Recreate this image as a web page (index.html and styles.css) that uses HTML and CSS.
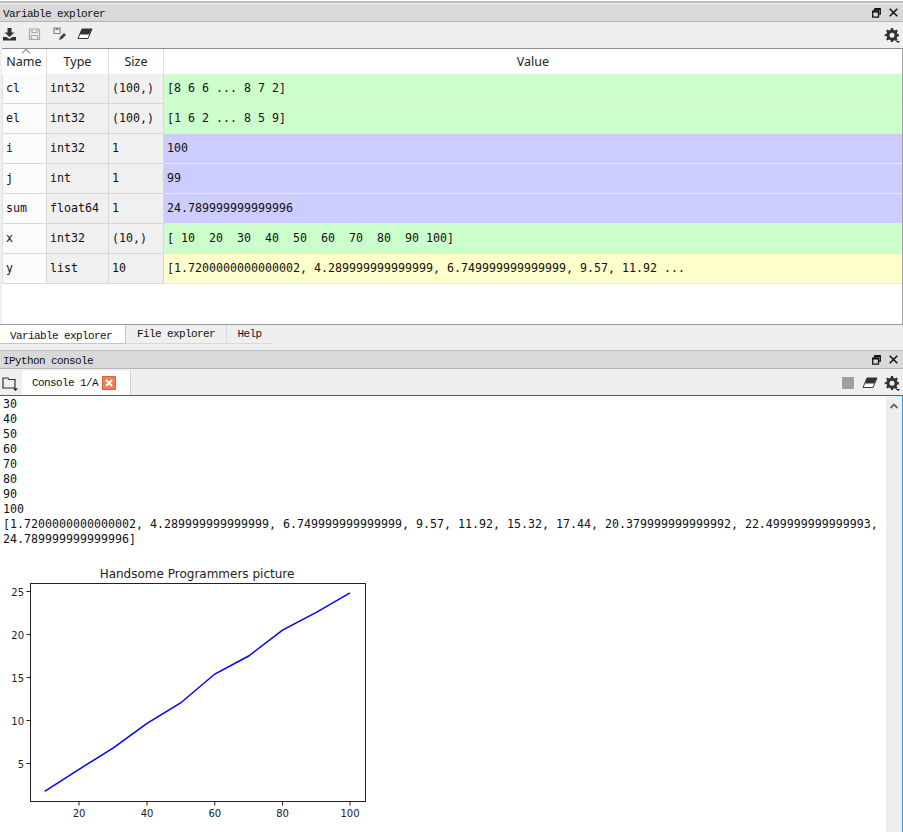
FILE: index.html
```
<!DOCTYPE html>
<html lang="en">
<head>
<meta charset="utf-8">
<title>Spyder</title>
<link rel="stylesheet" href="styles.css">
</head>
<body>
<div class="app">
  <div class="topline"></div>
  <div class="titlebar">
    <span class="title">Variable explorer</span>
    <span class="winbtns">
      <svg width="9" height="10" viewBox="0 0 9 10"><path d="M2.500.7h5.800v5.500H6.500M.7 3.200h5.800v6H.7zM2.500.7v2.500M.7 3.800h5.800M2.500 1.500h5.800" fill="none" stroke="#111" stroke-width="1.300"/></svg>
      <svg width="9" height="9" viewBox="0 0 9 9"><path d="M.7.700l7.600 7.600M8.300.7L.7 8.300" stroke="#111" stroke-width="1.500"/></svg>
    </span>
  </div>
  <div class="toolbar">
    <div class="tools">
      <svg class="ic" width="15" height="15" viewBox="0 0 15 15"><path d="M5.500 1h4v4.500h3L7.500 10 2.500 5.500h3z" fill="#333"/><path d="M1 10h3.500l3 2 3-2H14v3.500H1z" fill="#333"/></svg>
      <svg class="ic" width="15" height="15" viewBox="0 0 15 15"><path d="M2.500 2h9l1 1v9.500h-10zM5 2v3.500h5V2M4.500 12.500V8.500h6v4" fill="none" stroke="#aaa" stroke-width="1.200"/></svg>
      <svg class="ic" width="15" height="15" viewBox="0 0 15 15"><path d="M2 1h6v5.500H2z" fill="none" stroke="#888" stroke-width="1.200"/><path d="M3.500 1h3v2h-3z" fill="#888"/><path d="M7 13l1-3 4-4 2 2-4 4z" fill="#444"/></svg>
      <svg class="ic" width="16" height="12" viewBox="0 0 16 12"><path d="M5 1h10L11 10.500H1z" fill="#fff" stroke="#333"/><path d="M5 1h10L12 6.500H3z" fill="#333"/></svg>
    </div>
    <svg class="gear" width="16" height="16" viewBox="0 0 16 16"><path d="M7 1h2l.4 1.800 1.500.6 1.600-1 1.400 1.400-1 1.600.6 1.500L15 7.300v2l-1.800.4-.6 1.500 1 1.600-1.400 1.400-1.600-1-1.500.6L9 15H7l-.4-1.800-1.500-.6-1.600 1-1.400-1.400 1-1.600-.6-1.500L.7 9.300v-2l1.800-.4.6-1.500-1-1.600 1.400-1.400 1.600 1 1.500-.6z" fill="#333"/><circle cx="8" cy="8.200" r="2.500" fill="#eee"/><path d="M12 14h4l-2 2z" fill="#111"/></svg>
  </div>

  <div class="explorer">
    <div class="grid">
      <div class="head name">Name<span class="sort"></span></div>
      <div class="head">Type</div>
      <div class="head">Size</div>
      <div class="head last">Value</div>

      <div class="cell name">cl</div><div class="cell alt">int32</div><div class="cell alt">(100,)</div><div class="cell val green">[8 6 6 ... 8 7 2]</div>
      <div class="cell name">el</div><div class="cell alt">int32</div><div class="cell alt">(100,)</div><div class="cell val green">[1 6 2 ... 8 5 9]</div>
      <div class="cell name">i</div><div class="cell alt">int32</div><div class="cell alt">1</div><div class="cell val blue">100</div>
      <div class="cell name">j</div><div class="cell alt">int</div><div class="cell alt">1</div><div class="cell val blue">99</div>
      <div class="cell name">sum</div><div class="cell alt">float64</div><div class="cell alt">1</div><div class="cell val blue">24.789999999999996</div>
      <div class="cell name">x</div><div class="cell alt">int32</div><div class="cell alt">(10,)</div><div class="cell val green">[ 10  20  30  40  50  60  70  80  90 100]</div>
      <div class="cell name">y</div><div class="cell alt">list</div><div class="cell alt">10</div><div class="cell val yellow">[1.7200000000000002, 4.289999999999999, 6.749999999999999, 9.57, 11.92 ...</div>
    </div>
  </div>

  <div class="tabs">
    <span class="tab active">Variable explorer</span>
    <span class="tab">File explorer</span>
    <span class="tab help">Help</span>
  </div>

  <div class="titlebar second">
    <span class="title">IPython console</span>
    <span class="winbtns">
      <svg width="9" height="10" viewBox="0 0 9 10"><path d="M2.500.7h5.800v5.500H6.500M.7 3.200h5.800v6H.7zM2.500.7v2.500M.7 3.800h5.800M2.500 1.500h5.800" fill="none" stroke="#111" stroke-width="1.300"/></svg>
      <svg width="9" height="9" viewBox="0 0 9 9"><path d="M.7.700l7.600 7.600M8.300.7L.7 8.300" stroke="#111" stroke-width="1.500"/></svg>
    </span>
  </div>
  <div class="console-bar">
    <svg class="folder" width="16" height="15" viewBox="0 0 16 15"><path d="M1 12V2h5l1 1.500h6v8.500z" fill="none" stroke="#333" stroke-width="1.200"/><path d="M11 12.500h5l-2.500 2.500z" fill="#111"/></svg>
    <div class="ctab">
      <span>Console 1/A</span>
      <svg width="14" height="14" viewBox="0 0 14 14"><rect x="0.500" y="0.500" width="13" height="13" fill="#ee8058" stroke="#d9603a"/><path d="M4 4l6 6M10 4l-6 6" stroke="#fff" stroke-width="2"/></svg>
    </div>
    <div class="ctools">
      <span class="stop"></span>
      <svg width="16" height="12" viewBox="0 0 16 12"><path d="M5 1h10L11 10.500H1z" fill="#fff" stroke="#333"/><path d="M5 1h10L12 6.500H3z" fill="#333"/></svg>
      <svg width="16" height="16" viewBox="0 0 16 16"><path d="M7 1h2l.4 1.800 1.500.6 1.600-1 1.400 1.400-1 1.600.6 1.500L15 7.300v2l-1.800.4-.6 1.500 1 1.600-1.400 1.400-1.600-1-1.500.6L9 15H7l-.4-1.800-1.500-.6-1.600 1-1.400-1.400 1-1.600-.6-1.500L.7 9.300v-2l1.800-.4.6-1.500-1-1.600 1.400-1.400 1.600 1 1.500-.6z" fill="#333"/><circle cx="8" cy="8.200" r="2.500" fill="#eee"/><path d="M12 14h4l-2 2z" fill="#111"/></svg>
    </div>
  </div>

  <div class="console">
    <div class="output">
      <pre class="text">30
40
50
60
70
80
90
100
[1.7200000000000002, 4.289999999999999, 6.749999999999999, 9.57, 11.92, 15.32, 17.44, 20.379999999999992, 22.499999999999993,
24.789999999999996]</pre>
      <svg class="plot" width="380" height="272" viewBox="0 0 380 272">
        <text class="ptitle" x="197" y="18" text-anchor="middle">Handsome Programmers picture</text>
        <rect x="30.500" y="23.500" width="335" height="218" fill="#fff" stroke="#222" stroke-width="1"/>
        <path d="M44.700 231.300L79 209.300 113 188.200 147 163.300 180.600 143 214.800 114 248.600 96 282.500 70.200 316.300 52.300 350 32.900" fill="none" stroke="#00f" stroke-width="1.500"/>
        <path d="M79 241.500v4M147 241.500v4M214.800 241.500v4M282.500 241.500v4M350 241.500v4M30.500 31.500h-4M30.500 74.500h-4M30.500 117.500h-4M30.500 160.500h-4M30.500 203.500h-4" stroke="#222" fill="none"/>
        <g class="ticks">
          <text x="79" y="257" text-anchor="middle">20</text>
          <text x="147" y="257" text-anchor="middle">40</text>
          <text x="214.800" y="257" text-anchor="middle">60</text>
          <text x="282.500" y="257" text-anchor="middle">80</text>
          <text x="350" y="257" text-anchor="middle">100</text>
          <text x="24" y="36" text-anchor="end">25</text>
          <text x="24" y="79" text-anchor="end">20</text>
          <text x="24" y="122" text-anchor="end">15</text>
          <text x="24" y="165" text-anchor="end">10</text>
          <text x="24" y="208" text-anchor="end">5</text>
        </g>
      </svg>
    </div>
    <div class="scrollbar">
      <svg width="10" height="8" viewBox="0 0 10 8"><path d="M1.500 6L5 2.500 8.500 6" fill="none" stroke="#666" stroke-width="1.800"/></svg>
    </div>
  </div>
</div>
</body>
</html>
```
FILE: styles.css
```
* { box-sizing: border-box; }
html, body { margin: 0; padding: 0; height: 100%; overflow: hidden; }
body { background: #efefef; }
.app { width: 903px; height: 832px; display: flex; flex-direction: column; overflow: hidden; }
.topline { height: 3px; border-top: 1px solid #fff; border-bottom: 1px solid #bcbcbc; background: #bcbcbc; flex: none; margin-bottom: 1px; }
.titlebar { flex: none; height: 18px; background: #d9d9d9; border-bottom: 1px solid #b4b4b4; display: flex; align-items: center; justify-content: space-between; padding: 0 5px 0 3px; }
.title { font: 11px/14px "Liberation Mono", monospace; letter-spacing: -.6px; color: #111; padding-top: 2px; }
.winbtns { display: flex; gap: 8px; align-items: center; }
.winbtns svg { display: block; }
.toolbar { flex: none; height: 26px; display: flex; align-items: center; justify-content: space-between; padding: 0 3px 2px 2px; }
.tools { display: flex; gap: 10px; align-items: center; }
.ic { display: block; }
.gear { display: block; margin-top: 2px; }
.explorer { flex: none; height: 276px; margin-left: 2px; background: #fff; border-top: 1px solid #8c8c98; border-right: 1px solid #a0a0a0; }
.grid { display: grid; grid-template-columns: 45px 62px 55px 1fr; grid-template-rows: 25px repeat(7, 30px); font: 11.640px/1 "DejaVu Sans Mono", monospace; color: #111; }
.head { font: 12.500px/25px "Noto Sans", sans-serif; text-align: center; border-right: 1px solid #e0e0e0; background: #fff; color: #222; position: relative; }
.head.last { border-right: 0; }
.sort { position: absolute; left: 21px; top: 0; width: 6px; height: 6px; border-left: 1px solid #888; border-top: 1px solid #888; transform: translateY(1px) rotate(45deg); }
.cell { border-right: 1px solid #d8d8d8; border-bottom: 1px solid #d8d8d8; padding: 1px 0 0 3px; display: flex; align-items: center; white-space: pre; }
.cell.name { background: #fbfbfb; padding-left: 3px; border-left: 1px solid #e0e0e0; }
.cell.alt { background: #f0f0f0; }
.cell.val { border-right: 0; border-bottom-color: #e8e8e8; padding-left: 3px; }
.green { background: #ccffcc; }
.blue { background: #ccccff; }
.yellow { background: #ffffcc; }
.tabs { flex: none; height: 27px; display: flex; align-items: flex-start; border-top: 1px solid #9a9a9a; border-bottom: 1px solid #bcbcbc; font: 11px/19px "Liberation Mono", monospace; letter-spacing: -.6px; color: #111; }
.tab { height: 19px; width: 101px; text-align: center; border-right: 1px solid #d9d9d9; border-bottom: 1px solid #d9d9d9; }
.tab.active { width: 126px; background: #fff; border-right: 1px solid #c4c4c4; border-bottom: 1px solid #c4c4c4; line-height: 22px; padding-right: 3px; }
.tab.help { width: 45px; border-right: 0; }
.console-bar { flex: none; height: 26px; display: flex; align-items: flex-end; padding: 0 3px 0 2px; }
.folder { display: block; align-self: center; margin-top: 2px; }
.ctab { margin-left: 4px; width: 109px; height: 24px; background: #fff; display: flex; align-items: center; padding-left: 10px; gap: 4px; font: 11px/14px "Liberation Mono", monospace; letter-spacing: -.6px; color: #111; border-right: 1px solid #d0d0d0; }
.ctools { margin-left: auto; display: flex; gap: 6px; align-items: center; align-self: center; margin-top: 2px; }
.ctools svg { display: block; }
.stop { width: 12px; height: 12px; background: #a0a0a0; display: block; margin-right: 2px; }
.console { flex: 1; min-height: 0; display: flex; background: #fff; border-top: 1px solid #0a72c4; border-right: 1px solid #3a96dd; }
.output { flex: 1; min-width: 0; padding: 1px 0 0 3px; overflow: hidden; }
.text { margin: 0; font: 11.640px/15px "DejaVu Sans Mono", monospace; color: #111; white-space: pre; }
.plot { display: block; margin: 13px 0 0 -3px; }
.ptitle { font: 12px "DejaVu Sans", sans-serif; fill: #222; }
.ticks text { font: 10px "DejaVu Sans", sans-serif; fill: #222; }
.scrollbar { flex: none; width: 16px; background: #eee; display: flex; justify-content: center; align-items: flex-start; padding-top: 6px; }
.scrollbar svg { display: block; }
```
